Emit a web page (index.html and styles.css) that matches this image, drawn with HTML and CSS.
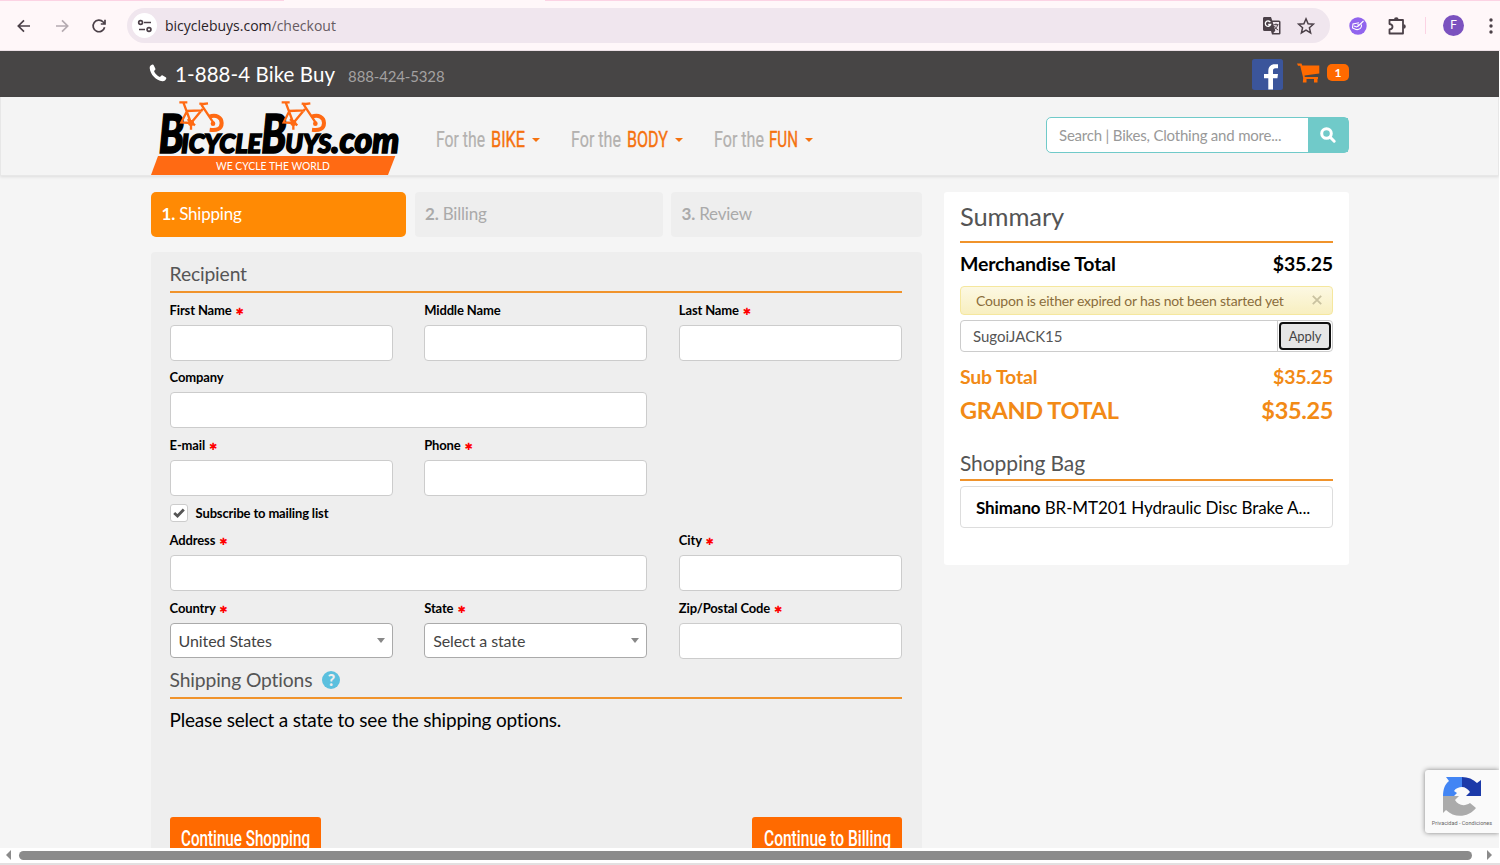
FILE: index.html
```html
<!DOCTYPE html>
<html lang="en">

<head>
    <meta charset="UTF-8">
    <title>Checkout - BicycleBuys.com</title>
    <link rel="stylesheet" href="styles.css">
</head>

<body>
    <div class="browser-bar">
        <div class="tab-edge"></div>
        <div class="browser-tools">
            <svg class="nav-icon" width="16" height="16" viewBox="0 0 16 16"><path d="M14 8H2.5M8 2.3L2.3 8L8 13.7"/></svg>
            <svg class="nav-icon muted" width="16" height="16" viewBox="0 0 16 16"><path d="M2 8H13.5M8 2.3L13.7 8L8 13.7"/></svg>
            <svg class="nav-icon" width="16" height="16" viewBox="0 0 16 16"><path d="M13.6 9.2A5.8 5.8 0 1 1 12.2 4L14 5.8M14 1.8V6H9.8"/></svg>
            <div class="address">
                <span class="site-info">
                    <svg width="16" height="14" viewBox="0 0 16 14"><path d="M7 3.5H14M2 10.5H8"/><circle cx="3.6" cy="3.5" r="1.9"/><circle cx="12" cy="10.5" r="1.9"/></svg>
                </span>
                <span class="url">bicyclebuys.com<span class="path">/checkout</span></span>
                <svg class="translate" width="18" height="18" viewBox="0 0 18 18">
                    <path d="M1 0h7l1.2 3.5H16a1.5 1.5 0 0 1 1.5 1.5v11.5A1.2 1.2 0 0 1 16.300 17.500H9L8 14H1.500A1.500 1.500 0 0 1 0 12.500V1.500A1.500 1.500 0 0 1 1 0z" fill="#4b4048"/>
                    <path d="M9.700 5h6.300v11h-5.700l2-2.300z" fill="#f0e6ee"/>
                    <path d="M7.300 5.200A2.700 2.700 0 1 0 7.600 7.500H5.200" fill="none" stroke="#fff" stroke-width="1.300"/>
                    <path d="M10.500 7.700h5M13 6.500v1.200M14.600 7.700c-.4 2.300-1.800 4-3.600 5M11.500 9c.8 2 2 3.200 3.700 4" fill="none" stroke="#4b4048"/>
                </svg>
                <svg class="star" width="18" height="18" viewBox="0 0 18 18"><path d="M9 1.800L11.100 6.700L16.400 7.200L12.400 10.700L13.600 15.900L9 13.100L4.400 15.900L5.600 10.700L1.600 7.200L6.900 6.700Z"/></svg>
            </div>
            <svg class="ext" width="18" height="18" viewBox="0 0 18 18">
                <circle cx="9" cy="9" r="8.700" fill="#9164ee"/>
                <path d="M14.500 4L9.800 8.500L8.500 7.500M9.800 8.500L12.500 6.200M12.500 7.500C13 11.500 10 13 7 12.500L3.500 11L4 7L7.500 6.300L10 5.800M5 9l2.500 1 2-1" fill="none" stroke="#fff" stroke-width="1.100"/>
            </svg>
            <svg class="puzzle" width="19" height="20" viewBox="0 0 19 20"><path d="M1.500 4H15V17.500H1.500V13.500C5.500 13 5.500 8.500 1.500 8Z"/><path class="knob" d="M6 3.500a2.300 2.300 0 0 1 4.600 0zM15.500 8.200a2.300 2.300 0 0 1 0 4.600z"/></svg>
            <span class="divider"></span>
            <span class="avatar">F</span>
            <svg class="dots" width="4" height="16" viewBox="0 0 4 16"><circle cx="2" cy="2" r="1.700"/><circle cx="2" cy="8" r="1.700"/><circle cx="2" cy="14" r="1.700"/></svg>
        </div>
    </div>

    <div class="page">
        <div class="top-bar">
            <div class="container">
                <svg class="phone-icon" width="18" height="18" viewBox="0 0 18 18"><path d="M3.600.6C1.800 1 .5 2.300.7 4.200C1.300 10.500 7 16.500 13.400 17.300C15.300 17.500 16.800 16.200 17.300 14.500C17.400 13.900 17.200 13.500 16.700 13.200L13.700 11.500C13.200 11.200 12.700 11.300 12.300 11.700L10.900 13.100C8.200 12 6 9.700 5 7.100L6.100 6C6.500 5.600 6.600 5.100 6.300 4.600L4.700 1.200C4.500.7 4.100.5 3.600.6Z"/></svg>
                <span class="phone">1-888-4 Bike Buy</span>
                <span class="phone-alt">888-424-5328</span>
                <svg class="facebook" width="31" height="31" viewBox="0 0 31 31">
                    <rect width="31" height="31" rx="2.500" fill="#3b559b"/>
                    <path d="M16.300 30.500V19.300H12V15H16.300V11.800C16.300 7.500 18.800 5.200 22.800 5.200H26V9.300H23.600C21.500 9.300 21 10.300 21 12V15H26L25.400 19.300H21V30.500Z" fill="#fff"/>
                </svg>
                <svg class="cart" width="23" height="20" viewBox="0 0 23 20"><path d="M0 .5H4.500L5.200 2.500H22.300V10.500L7.500 12.500L7.800 14H21V16H20.500V19.500H17V16H9.500V19.500H5.800L6.200 15L3.200 2.700H1Z"/></svg>
                <span class="badge">1</span>
            </div>
        </div>

        <div class="header">
            <div class="container">
                <svg class="logo" width="249" height="78" viewBox="33 6 747 234">
                    <g class="logo-name">
                        <text x="56" y="175" font-size="160" textLength="76" lengthAdjust="spacingAndGlyphs">B</text>
                        <text class="caps" x="124" y="175" font-size="112" textLength="240" lengthAdjust="spacingAndGlyphs">icycle</text>
                        <text x="364" y="175" font-size="160" textLength="76" lengthAdjust="spacingAndGlyphs">B</text>
                        <text class="caps" x="436" y="175" font-size="112" textLength="138" lengthAdjust="spacingAndGlyphs">uys</text>
                        <text x="574" y="175" font-size="106" textLength="204" lengthAdjust="spacingAndGlyphs">.com</text>
                    </g>
                    <g id="bike">
                        <path d="M118 22H142M130 22L153 84M138 48L188 46M188 42L153 84L124 82L140 50M178 26L190 27L204 25M184 29L222 86M143 72L165 91M153 84V104" fill="none" stroke="#ff6a13" stroke-width="7"/>
                        <path d="M208 65C228 58 245 66 245 84C245 102 230 107 209 104" fill="none" stroke="#ff6a13" stroke-width="12"/>
                        <circle cx="219" cy="86" r="7" fill="#ff6a13"/>
                        <circle cx="153" cy="84" r="9" fill="#ff6a13"/>
                    </g>
                    <use href="#bike" x="307"/>
                    <path d="M54 183H766L744 240H33Z" fill="#ff6a13"/>
                    <text class="slogan" x="228" y="224" textLength="342" lengthAdjust="spacingAndGlyphs">WE CYCLE THE WORLD</text>
                </svg>
                <div class="menu">
                    <a class="menu-item">
                        <svg width="90" height="30"><text x="0" y="22" textLength="49" lengthAdjust="spacingAndGlyphs">For the</text><text class="hot" x="55" y="22" textLength="34" lengthAdjust="spacingAndGlyphs">BIKE</text></svg>
                        <i class="caret"></i>
                    </a>
                    <a class="menu-item">
                        <svg width="98" height="30"><text x="0" y="22" textLength="50" lengthAdjust="spacingAndGlyphs">For the</text><text class="hot" x="56" y="22" textLength="41" lengthAdjust="spacingAndGlyphs">BODY</text></svg>
                        <i class="caret"></i>
                    </a>
                    <a class="menu-item">
                        <svg width="85" height="30"><text x="0" y="22" textLength="50" lengthAdjust="spacingAndGlyphs">For the</text><text class="hot" x="55" y="22" textLength="29" lengthAdjust="spacingAndGlyphs">FUN</text></svg>
                        <i class="caret"></i>
                    </a>
                </div>
                <div class="search">
                    <span class="search-text">Search | Bikes, Clothing and more...</span>
                    <span class="search-btn">
                        <svg width="16" height="16" viewBox="0 0 16 16"><circle cx="6.500" cy="6.500" r="4.800"/><path d="M10 10L14.200 14.200"/></svg>
                    </span>
                </div>
            </div>
        </div>

        <div class="container content">
            <div class="main">
                <div class="steps">
                    <div class="step active"><b>1.</b> Shipping</div>
                    <div class="step"><b>2.</b> Billing</div>
                    <div class="step"><b>3.</b> Review</div>
                </div>
                <form class="panel">
                    <h2>Recipient</h2>
                    <div class="fields">
                        <div class="field">
                            <label>First Name <i class="req">✱</i></label>
                            <input type="text">
                        </div>
                        <div class="field">
                            <label>Middle Name</label>
                            <input type="text">
                        </div>
                        <div class="field">
                            <label>Last Name <i class="req">✱</i></label>
                            <input type="text">
                        </div>
                        <div class="field wide">
                            <label>Company</label>
                            <input type="text">
                        </div>
                        <div class="field first">
                            <label>E-mail <i class="req">✱</i></label>
                            <input type="text">
                        </div>
                        <div class="field">
                            <label>Phone <i class="req">✱</i></label>
                            <input type="text">
                        </div>
                        <div class="subscribe">
                            <span class="check"><svg width="12" height="10" viewBox="0 0 12 10"><path d="M1.200 5L4.500 8L10.800 1.500"/></svg></span>
                            <span>Subscribe to mailing list</span>
                        </div>
                        <div class="field wide">
                            <label>Address <i class="req">✱</i></label>
                            <input type="text">
                        </div>
                        <div class="field">
                            <label>City <i class="req">✱</i></label>
                            <input type="text">
                        </div>
                        <div class="field">
                            <label>Country <i class="req">✱</i></label>
                            <div class="select">United States<i class="arrow"></i></div>
                        </div>
                        <div class="field">
                            <label>State <i class="req">✱</i></label>
                            <div class="select">Select a state<i class="arrow"></i></div>
                        </div>
                        <div class="field">
                            <label>Zip/Postal Code <i class="req">✱</i></label>
                            <input type="text">
                        </div>
                    </div>
                    <h2 class="options">Shipping Options <span class="help">?</span></h2>
                    <p class="notice">Please select a state to see the shipping options.</p>
                    <div class="actions">
                        <a class="btn"><svg width="151" height="44"><text x="11" y="29" textLength="129" lengthAdjust="spacingAndGlyphs">Continue Shopping</text></svg></a>
                        <a class="btn"><svg width="150" height="44"><text x="12" y="29" textLength="127" lengthAdjust="spacingAndGlyphs">Continue to Billing</text></svg></a>
                    </div>
                </form>
            </div>

            <div class="summary">
                <h1>Summary</h1>
                <div class="row merch"><span>Merchandise Total</span><span>$35.25</span></div>
                <div class="alert">
                    <span>Coupon is either expired or has not been started yet</span>
                    <svg width="10" height="10" viewBox="0 0 10 10"><path d="M.8.800L9.200 9.200M9.200.800L.8 9.200"/></svg>
                </div>
                <div class="coupon">
                    <span class="code">SugoiJACK15</span>
                    <span class="apply-wrap"><span class="apply">Apply</span></span>
                </div>
                <div class="row sub"><span>Sub Total</span><span>$35.25</span></div>
                <div class="row grand"><span>GRAND TOTAL</span><span>$35.25</span></div>
                <h3>Shopping Bag</h3>
                <div class="bag-item"><b>Shimano</b> BR-MT201 Hydraulic Disc Brake A...</div>
            </div>
        </div>

        <div class="recaptcha">
            <svg width="40" height="40" viewBox="0 0 40 40">
                <path d="M20 1H4L7 5C3 8 1 13 1 20H12L15 17L12 15C14 12 17 11 20 11Z" fill="#4285f4"/>
                <path d="M20 1C26 1 31 3 35 7L39 4V20H24L28 16C26 13 23 11 20 11Z" fill="#1c3aa9"/>
                <path d="M1 20V37L4 34C13 43 27 41 34 32L28 27C22 31 16 29 13 24L17 20Z" fill="#ababab"/>
            </svg>
            <span>Privacidad - Condiciones</span>
        </div>
    </div>

    <div class="scrollbar">
        <i class="left"></i>
        <div class="thumb"></div>
        <i class="right"></i>
    </div>
</body>

</html>
```
FILE: styles.css
```css
* {
    box-sizing: border-box;
}

body {
    margin: 0;
    height: 865px;
    overflow: hidden;
    font-family: Lato, "Liberation Sans", sans-serif;
    font-size: 16px;
    font-variant-ligatures: none;
    color: #000;
    background-color: #f5f5f5;
}

svg {
    display: block;
    flex: none;
    overflow: visible;
}

/* browser */
.browser-bar {
    height: 51px;
    background-color: #fff7f9;
    border-bottom: 1px solid #ece0e5;
}

.tab-edge {
    height: 1px;
    background: linear-gradient(to right, #fcd3e4 284px, #fff7f9 284px, #fff7f9 545px, #fcd3e4 545px);
}

.browser-tools {
    display: flex;
    align-items: center;
    height: 49px;
    padding: 0 7px 0 16px;
}

.nav-icon {
    margin-right: 22px;
    fill: none;
    stroke: #4b4048;
    stroke-width: 1.7;
}

.nav-icon.muted {
    margin-right: 21px;
    stroke: #b5abb1;
}

.address {
    display: flex;
    align-items: center;
    width: 1204px;
    height: 35px;
    margin-left: -2px;
    padding: 0 16px 0 5px;
    border-radius: 18px;
    background-color: #f0e6ee;
}

.site-info {
    display: flex;
    align-items: center;
    justify-content: center;
    width: 25px;
    height: 25px;
    border-radius: 50%;
    background-color: #fff;
}

.site-info svg {
    fill: none;
    stroke: #4b4048;
    stroke-width: 1.7;
}

.url {
    flex: 1;
    margin-left: 8px;
    font-family: "Open Sans", sans-serif;
    font-size: 14px;
    color: #2a2328;
}

.url .path {
    color: #665b62;
}

.translate {
    margin-right: 1px;
}

.star {
    margin-left: 15px;
    margin-right: -1px;
    fill: none;
    stroke: #4b4048;
    stroke-width: 1.5;
}

.ext {
    margin-left: 19px;
}

.puzzle {
    margin-left: 21px;
    fill: none;
    stroke: #4b4048;
    stroke-width: 1.8;
    stroke-linejoin: round;
}

.puzzle .knob {
    fill: #4b4048;
    stroke: none;
}

.divider {
    width: 1px;
    height: 17px;
    margin-left: 18px;
    background-color: #fcd3e4;
}

.avatar {
    width: 21px;
    height: 21px;
    margin-left: 17px;
    border-radius: 50%;
    background-color: #7b52bf;
    color: #fff;
    font-family: Roboto, sans-serif;
    font-size: 12px;
    line-height: 21px;
    text-align: center;
}

.dots {
    margin-left: 25px;
    fill: #4b4048;
}

/* page */
.page {
    position: relative;
    height: 797px;
    overflow: hidden;
    border-right: 1px solid #fff;
}

.container {
    display: flex;
    width: 1198px;
    margin-left: 151px;
}

.top-bar {
    height: 46px;
    background-color: #474545;
}

.top-bar .container {
    align-items: center;
    height: 46px;
}

.phone-icon {
    margin: -2px 8px 0 -2px;
    fill: #fff;
}

.phone {
    margin-top: -1px;
    font-size: 20.5px;
    letter-spacing: 0.08px;
    color: #fff;
}

.phone-alt {
    margin: 3px auto 0 13px;
    font-size: 15px;
    letter-spacing: -0.15px;
    color: #a3a1a1;
}

.facebook {
    margin-top: 1px;
}

.cart {
    margin: -3px 7px 0 14px;
    fill: #ff6a00;
}

.badge {
    width: 22px;
    height: 17px;
    margin-top: -3px;
    border-radius: 5px;
    background-color: #ff6a00;
    color: #fff;
    font-size: 12px;
    font-weight: bold;
    line-height: 17px;
    text-align: center;
}

.header {
    height: 79px;
    background-color: #f4f4f4;
    border: 1px solid #e7e7e7;
    border-top: 0;
    box-shadow: 0 1px 3px rgba(0, 0, 0, 0.1);
}

.header .container {
    margin-left: 150px;
}

.logo-name text {
    font-weight: 900;
    font-style: italic;
    stroke: #000;
    stroke-width: 5;
}

.logo-name .caps {
    font-variant: small-caps;
}

.slogan {
    font-size: 32px;
    fill: #fff;
}

.menu {
    display: flex;
    margin: 28px auto 0 36px;
    gap: 31px;
}

.menu-item {
    display: flex;
    height: 30px;
}

.menu-item text {
    font-family: Roboto, sans-serif;
    font-size: 22px;
    fill: #b3b1af;
    stroke: #b3b1af;
    stroke-width: 0.2;
}

.menu-item .hot {
    fill: #f5720f;
    stroke: #f5720f;
    stroke-width: 0.4;
}

.caret {
    width: 0;
    height: 0;
    margin: 13px 0 0 6px;
    border: 4px solid transparent;
    border-top-color: #f5720f;
    border-bottom: 0;
}

.search {
    display: flex;
    width: 303px;
    height: 36px;
    margin-top: 20px;
    border: 1px solid #70cac9;
    border-radius: 5px;
    background-color: #fff;
}

.search-text {
    flex: 1;
    padding-left: 12px;
    font-size: 15px;
    letter-spacing: -0.2px;
    line-height: 34px;
    color: #999;
}

.search-btn {
    display: flex;
    align-items: center;
    justify-content: center;
    width: 40px;
    background-color: #70cac9;
}

.search-btn svg {
    fill: none;
    stroke: #fff;
    stroke-width: 3;
    stroke-linecap: round;
}

.content {
    justify-content: space-between;
    align-items: flex-start;
    padding-top: 16px;
}

.main {
    width: 771px;
}

.steps {
    display: grid;
    grid-template-columns: 255px 248px 251px;
    justify-content: space-between;
    margin-bottom: 15px;
}

.step {
    height: 45px;
    padding-left: 10.5px;
    border-radius: 4px;
    background-color: #eee;
    color: #aaa;
    font-size: 17px;
    letter-spacing: -0.2px;
    line-height: 44px;
}

.step.active {
    border-radius: 5px;
    background-color: #ff8a04;
    color: #fff;
}

.panel {
    height: 640px;
    padding: 0 20px 0 18.6px;
    border-radius: 4px;
    background-color: #eee;
}

h1,
h2,
h3 {
    margin: 0;
    font-weight: normal;
    color: #555;
    border-bottom: 2px solid #f0932b;
}

h2 {
    height: 41px;
    font-size: 19.3px;
    letter-spacing: -0.15px;
    line-height: 43px;
}

.fields {
    display: grid;
    grid-template-columns: repeat(3, 1fr);
    column-gap: 31.5px;
    padding-top: 5px;
}

.field {
    height: 67.4px;
}

.wide {
    grid-column: 1 / 3;
}

.first {
    grid-column: 1;
}

.field label {
    display: block;
    height: 27px;
    font-size: 13px;
    font-weight: bold;
    letter-spacing: -0.15px;
    line-height: 24px;
}

.req {
    margin-left: 1px;
    color: #f00;
    font-family: "DejaVu Sans", sans-serif;
    font-size: 10px;
    font-style: normal;
    font-weight: bold;
    line-height: 10px;
}

input,
.select {
    display: block;
    width: 100%;
    height: 36px;
    border: 1px solid #ccc;
    border-radius: 4px;
    background-color: #fff;
}

.select {
    display: flex;
    align-items: center;
    justify-content: space-between;
    height: 35px;
    padding: 0 7px 0 8px;
    border-color: #aaa;
    color: #444;
    letter-spacing: -0.1px;
}

.arrow {
    border: 4px solid transparent;
    border-top: 5px solid #888;
    border-bottom: 0;
}

.subscribe {
    display: flex;
    align-items: center;
    grid-column: 1 / 4;
    height: 28px;
    padding-bottom: 3px;
    font-size: 13px;
    font-weight: bold;
    letter-spacing: -0.15px;
}

.check {
    display: flex;
    align-items: center;
    justify-content: center;
    width: 18px;
    height: 18px;
    margin-right: 8px;
    border: 1px solid #ccc;
    border-radius: 3px;
    background-color: #fff;
}

.check svg {
    fill: none;
    stroke: #555;
    stroke-width: 2.8;
}

.options {
    display: flex;
    align-items: center;
    height: 36px;
    line-height: 33px;
}

.help {
    width: 18px;
    height: 18px;
    margin-left: 10px;
    border-radius: 50%;
    background-color: #5bc0de;
    color: #eee;
    font-size: 16px;
    font-weight: 900;
    line-height: 18px;
    text-align: center;
}

.notice {
    height: 118px;
    margin: 0;
    font-size: 19px;
    letter-spacing: -0.2px;
    line-height: 41px;
}

.actions {
    display: flex;
    justify-content: space-between;
}

.btn {
    border-radius: 3px;
    background-color: #ff6a00;
}

.btn text {
    font-family: Roboto, sans-serif;
    font-size: 22px;
    font-weight: 500;
    fill: #fff;
}

/* order summary */
.summary {
    width: 405px;
    height: 373px;
    padding: 0 16px;
    border-radius: 3px;
    background-color: #fff;
}

h1 {
    height: 51px;
    font-size: 25.5px;
    letter-spacing: -0.1px;
    line-height: 49px;
}

.row {
    display: flex;
    justify-content: space-between;
    font-weight: bold;
}

.merch {
    height: 43px;
    font-size: 19.5px;
    letter-spacing: -0.15px;
    line-height: 41px;
}

.alert {
    display: flex;
    align-items: center;
    justify-content: space-between;
    height: 29px;
    padding: 0 10px 1px 15px;
    border: 1px solid #f5e79e;
    border-radius: 4px;
    background: linear-gradient(#fcf8e3, #f8efc0);
    color: #8a6d3b;
    font-size: 14px;
    letter-spacing: -0.21px;
}

.alert svg {
    fill: none;
    stroke: #c9c2a0;
    stroke-width: 1.8;
}

.coupon {
    display: flex;
    height: 32px;
    margin-top: 5px;
    border: 1px solid #ccc;
    border-radius: 4px;
}

.code {
    flex: 1;
    padding-left: 12px;
    color: #555;
    font-size: 15px;
    line-height: 30px;
}

.apply-wrap {
    padding: 1px;
    border-left: 1px solid #ccc;
}

.apply {
    display: block;
    width: 52px;
    height: 28px;
    border: 2px solid #101010;
    border-radius: 4px;
    background-color: #e6e6e6;
    color: #444;
    font-size: 13px;
    letter-spacing: -0.1px;
    line-height: 24px;
    text-align: center;
}

.sub {
    padding-top: 8px;
    color: #f28a16;
    font-size: 19.5px;
    letter-spacing: -0.2px;
    line-height: 33px;
}

.grand {
    color: #f28a16;
    font-size: 23.5px;
    letter-spacing: -0.35px;
    line-height: 35px;
}

h3 {
    height: 37px;
    margin-top: 16px;
    font-size: 21px;
    letter-spacing: -0.1px;
    line-height: 37px;
}

.bag-item {
    height: 42px;
    margin-top: 5px;
    padding-left: 15px;
    border: 1px solid #ddd;
    border-radius: 4px;
    font-size: 17px;
    letter-spacing: -0.12px;
    line-height: 41px;
    white-space: nowrap;
}

.recaptcha {
    position: absolute;
    top: 719px;
    right: 0;
    display: flex;
    flex-direction: column;
    align-items: center;
    width: 74px;
    height: 63px;
    padding-top: 6px;
    border-radius: 3px 0 0 3px;
    background-color: #fafafa;
    box-shadow: 0 0 5px #808080;
}

.recaptcha span {
    margin-top: 4px;
    color: #666;
    font-family: Roboto, sans-serif;
    font-size: 5.5px;
    white-space: nowrap;
}

.scrollbar {
    display: flex;
    align-items: center;
    height: 17px;
    padding: 0 8px 1px 6px;
    border-bottom: 2px solid #e3e0e1;
    background-color: #fff;
}

.thumb {
    width: 1453px;
    height: 9px;
    margin: 0 auto 0 8px;
    border-radius: 5px;
    background-color: #8b8b8b;
}

.left,
.right {
    border: 5px solid transparent;
}

.left {
    border-left: 0;
    border-right-color: #8b8b8b;
}

.right {
    border-right: 0;
    border-left-color: #8b8b8b;
}
```
